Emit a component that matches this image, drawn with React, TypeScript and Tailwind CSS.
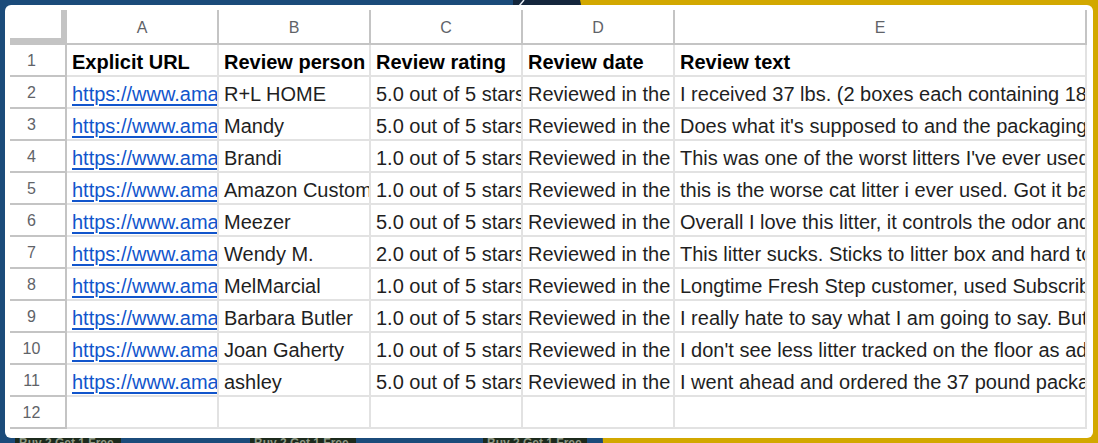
import React from 'react';

type Review = { person: string; rating: string; text: string };

const reviews: Review[] = [
  { person: 'R+L HOME', rating: '5.0', text: 'I received 37 lbs. (2 boxes each containing 18.5 lbs) of litter and it was great' },
  { person: 'Mandy', rating: '5.0', text: "Does what it's supposed to and the packaging is easy to carry" },
  { person: 'Brandi', rating: '1.0', text: "This was one of the worst litters I've ever used. It doesn't clump" },
  { person: 'Amazon Customer', rating: '1.0', text: 'this is the worse cat litter i ever used. Got it based on the reviews' },
  { person: 'Meezer', rating: '5.0', text: 'Overall I love this litter, it controls the odor and clumps well' },
  { person: 'Wendy M.', rating: '2.0', text: 'This litter sucks. Sticks to litter box and hard to scoop out' },
  { person: 'MelMarcial', rating: '1.0', text: 'Longtime Fresh Step customer, used Subscribe & Save for years' },
  { person: 'Barbara Butler', rating: '1.0', text: 'I really hate to say what I am going to say. But this litter' },
  { person: 'Joan Gaherty', rating: '1.0', text: "I don't see less litter tracked on the floor as advertised" },
  { person: 'ashley', rating: '5.0', text: 'I went ahead and ordered the 37 pound package and it arrived' },
];

const letters = ['A', 'B', 'C', 'D', 'E'];

const rowHead =
  'h-[32px] border-r-2 border-b-2 border-[#c4c4c4] pr-[12px] pt-[2px] flex items-center justify-center text-[16px] text-[#5f6368]';
const cell =
  'h-[32px] border-r-2 border-b-2 border-[#e2e2e2] pl-[5px] pt-[6px] leading-[23px] text-[20px] whitespace-nowrap overflow-hidden';

function Backdrop() {
  return (
    <svg className="absolute inset-0" width="1098" height="443" viewBox="0 0 1098 443">
      <rect width="1098" height="443" fill="#1b4b7a" />
      <polygon points="580,0 1098,0 1098,443 603,443" fill="#d2a800" />
      <polygon points="513,0 580,0 582,10 513,10" fill="#14263c" />
      <line x1="519" y1="6" x2="524" y2="0" stroke="#e8eef5" strokeWidth="1.5" />
      <rect x="15" y="436" width="106" height="7" fill="#1c2a1c" />
      <rect x="250" y="436" width="106" height="7" fill="#1c2a1c" />
      <rect x="483" y="436" width="104" height="7" fill="#1c2a1c" />
      <g fontSize="12" fontWeight="bold" fill="#8d9884" fontFamily="Liberation Sans, sans-serif">
        <text x="19" y="447">Buy 2 Get 1 Free</text>
        <text x="254" y="447">Buy 2 Get 1 Free</text>
        <text x="487" y="447">Buy 2 Get 1 Free</text>
      </g>
    </svg>
  );
}

export default function App() {
  return (
    <div className="relative w-[1098px] h-[443px] p-[5px] font-['Liberation_Sans',Arial,sans-serif] overflow-hidden">
      <Backdrop />
      <div className="relative w-[1088px] h-[433px] bg-white rounded-[6px] pt-[5px] pl-[5px]">
        <div className="grid grid-cols-[57px_152px_152px_152px_152px_412px] text-[#1f1f1f]">
          {/* column headers */}
          <div className="h-[35px] border-r-[6px] border-b-[7px] border-[#c4c4c4]" />
          {letters.map(l => (
            <div
              key={l}
              className="h-[35px] border-r-2 border-b-2 border-[#c4c4c4] pt-[2px] flex items-center justify-center text-[16px] text-[#5f6368]"
            >
              {l}
            </div>
          ))}

          {/* row 1: titles */}
          <div className={rowHead}>1</div>
          {['Explicit URL', 'Review person', 'Review rating', 'Review date', 'Review text'].map(t => (
            <div key={t} className={`${cell} font-bold text-black`}>{t}</div>
          ))}

          {reviews.map((r, i) => (
            <React.Fragment key={i}>
              <div className={rowHead}>{i + 2}</div>
              <div className={`${cell} text-[#1155cc] underline underline-offset-[3px]`}>
                https://www.amazon.com/product-reviews/B07
              </div>
              <div className={cell}>{r.person}</div>
              <div className={cell}>{r.rating} out of 5 stars</div>
              <div className={cell}>Reviewed in the United States</div>
              <div className={cell}>{r.text}</div>
            </React.Fragment>
          ))}

          {/* row 12: empty */}
          <div className={rowHead}>12</div>
          {letters.map(l => (
            <div key={l} className={cell} />
          ))}
        </div>
      </div>
    </div>
  );
}
